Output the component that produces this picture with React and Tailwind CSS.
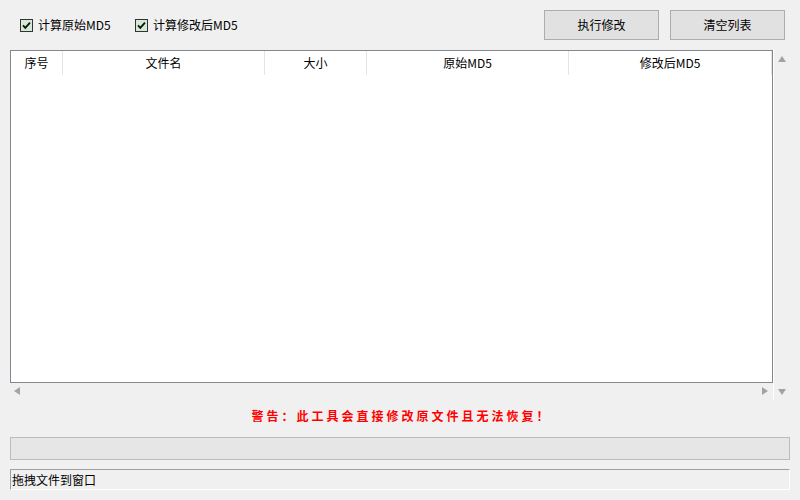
import React from "react";

const font = { fontFamily: '"Microsoft YaHei", "Noto Sans CJK SC", "Noto Sans", sans-serif' };

const columns = [
    { id: 1, text: "序号", width: "w-[52px]" },
    { id: 2, text: "文件名", width: "w-[202px]" },
    { id: 3, text: "大小", width: "w-[102px]" },
    { id: 4, text: "原始MD5", width: "w-[202px]" },
    { id: 5, text: "修改后MD5", width: "flex-1" },
];

const Check = ({ label, className }) => (
    <label className={`flex items-center gap-[5px] text-[12px] text-black ${className || ""}`}>
        <svg width="13" height="13" viewBox="0 0 13 13">
            <rect x="0.5" y="0.5" width="12" height="12" fill="#d4ead4" stroke="#333" />
            <path d="M3 6.3 L5.3 8.8 L10 3.6" fill="none" stroke="#111" strokeWidth="1.8" />
        </svg>
        {label}
    </label>
);

const Button = ({ children }) => (
    <button className="w-[115px] h-[30px] border border-[#adadad] bg-[#e1e1e1] text-[12px] text-black">
        {children}
    </button>
);

const Tri = ({ dir }) => {
    const pts = {
        up: "0,6 4,0 8,6",
        down: "0,0 8,0 4,6",
        left: "6,0 6,8 0,4",
        right: "0,0 6,4 0,8",
    }[dir];
    const w = dir === "up" || dir === "down" ? 8 : 6;
    const h = dir === "up" || dir === "down" ? 6 : 8;
    return (
        <svg width={w} height={h} viewBox={`0 0 ${w} ${h}`}>
            <polygon points={pts} fill="#a3a3a3" />
        </svg>
    );
};

export default function App() {
    return (
        <div style={font} className="w-[800px] h-[500px] bg-[#f0f0f0] flex flex-col overflow-hidden">
            {/* top bar */}
            <div className="h-[50px] flex items-start">
                <div className="flex items-center pl-[20px] pt-[16px]">
                    <Check label="计算原始MD5" className="w-[115px]" />
                    <Check label="计算修改后MD5" />
                </div>
                <div className="ml-auto flex gap-[11px] pt-[10px] pr-[15px]">
                    <Button>执行修改</Button>
                    <Button>清空列表</Button>
                </div>
            </div>

            {/* list + scrollbars */}
            <div className="flex pl-[10px]">
                <div className="w-[763px] flex flex-col">
                    <div className="h-[333px] border border-[#828790] bg-white">
                        <div className="flex h-[24px] text-[12px] text-black">
                            {columns.map(({ id, text, width }) => (
                                <div
                                    key={id}
                                    className={`${width} flex items-center justify-center border-r border-[#e5e5e5]`}
                                >
                                    {text}
                                </div>
                            ))}
                        </div>
                    </div>
                    <div className="h-[16px] flex items-center justify-between pl-[4px] pr-[5px]">
                        <Tri dir="left" />
                        <Tri dir="right" />
                    </div>
                </div>
                <div className="w-[17px] h-[349px] border-l border-white flex flex-col items-center justify-between pt-[6px] pb-[4px]">
                    <Tri dir="up" />
                    <Tri dir="down" />
                </div>
            </div>

            {/* warning */}
            <div className="h-[38px] flex items-center justify-center pb-[4px]">
                <span className="text-[12px] font-bold text-[#ff0000] tracking-[3px] mr-[-3px]">
                    警告：此工具会直接修改原文件且无法恢复！
                </span>
            </div>

            {/* progress */}
            <div className="mx-[10px] h-[23px] border border-[#bcbcbc] bg-[#e6e6e6]" />

            {/* status */}
            <div className="mx-[10px] mt-[9px] h-[21px] border-t border-l border-[#a0a0a0] border-r border-b border-r-white border-b-white flex items-center pl-[1px] text-[12px] text-black">
                拖拽文件到窗口
            </div>
        </div>
    );
}
